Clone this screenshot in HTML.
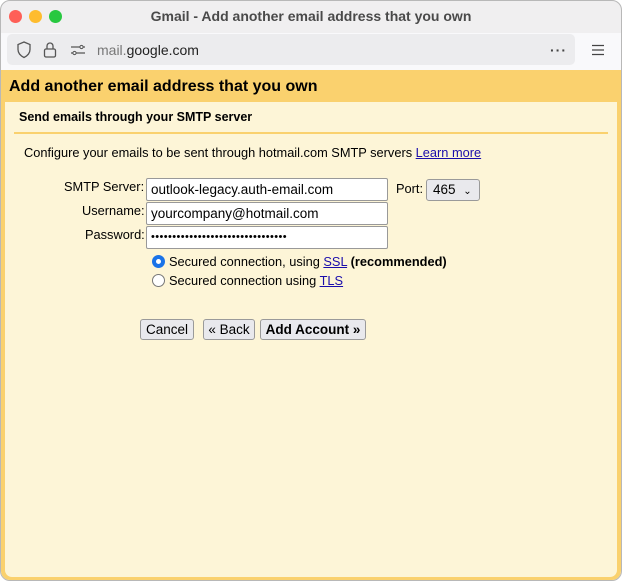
<!DOCTYPE html>
<html><head><style>
*{box-sizing:border-box}
body{margin:0;width:622px;height:581px;background:#fff;font-family:"Liberation Sans",Arial,sans-serif;overflow:hidden}
.win{position:absolute;left:0;top:0;width:622px;height:581px;border:1px solid #b8b8b8;border-radius:10px;overflow:hidden;background:#f0eff0}
.title{position:absolute;top:0;left:0;right:0;height:32px;text-align:center;line-height:31px;font-size:14px;font-weight:bold;color:#4a4a4a}
.dot{position:absolute;top:9px;width:13px;height:13px;border-radius:50%}
.tb{position:absolute;top:32px;left:0;right:0;height:37px;background:#f9f9fb}
.url{position:absolute;left:6px;top:1px;width:568px;height:31px;background:#ececee;border-radius:5px}
.content{position:absolute;top:69px;left:0;right:0;bottom:0;background:#fad16e;border-radius:0 0 9px 9px}
.inner{position:absolute;left:4px;right:4px;top:32px;bottom:3px;background:#fdf5d7;border-radius:0 0 7px 7px}
.h1{position:absolute;left:8px;top:8px;font-size:16px;font-weight:bold;color:#000}
.h2{position:absolute;font-size:12.5px;font-weight:bold}
.hr{position:absolute;height:2px;background:#fad16e}
.t{position:absolute;font-size:12.8px;color:#000;white-space:nowrap}
a{color:#1a0dab;text-decoration:underline}
.in{position:absolute;height:23px;background:#fff;border:1px solid #999;border-radius:2px;font-size:13.5px;padding:3px 4px;white-space:nowrap}
.btn{position:absolute;height:21px;border:1px solid #9a9a9a;border-radius:3px;background:#e9e9ed;font-size:13.5px;text-align:center;line-height:19px}
.radio{position:absolute;width:13px;height:13px;border-radius:50%;border:1px solid #777;background:#fff}
</style></head><body>
<div class="win">
<div class="title">Gmail - Add another email address that you own</div>
<div class="dot" style="left:8px;background:#fe5f57"></div>
<div class="dot" style="left:28px;background:#febc2e"></div>
<div class="dot" style="left:48px;background:#28c840"></div>
<div class="tb"><div class="url">
<svg style="position:absolute;left:9px;top:7px" width="16" height="18" viewBox="0 0 16 18"><path d="M8 1L2 3.5v5c0 4 3 6.5 6 8 3-1.5 6-4 6-8v-5z" fill="none" stroke="#555" stroke-width="1.3"/></svg>
<svg style="position:absolute;left:36px;top:7px" width="14" height="18" viewBox="0 0 14 18"><rect x="1.5" y="8" width="11" height="8" rx="1.5" fill="none" stroke="#555" stroke-width="1.3"/><path d="M4 8V5a3 3 0 016 0v3" fill="none" stroke="#555" stroke-width="1.3"/></svg>
<svg style="position:absolute;left:63px;top:10px" width="16" height="12" viewBox="0 0 16 12"><path d="M1 3h9M13 3h2M1 9h2M6 9h9" stroke="#555" stroke-width="1.2"/><circle cx="11.5" cy="3" r="1.6" fill="none" stroke="#555"/><circle cx="4.5" cy="9" r="1.6" fill="none" stroke="#555"/></svg>
<span style="position:absolute;left:90px;top:8px;font-size:14px;color:#777">mail.<span style="color:#222">google.com</span></span>
<span style="position:absolute;left:543px;top:8px;font-size:14px;color:#444;letter-spacing:1px;font-weight:bold">···</span>
</div>
<svg style="position:absolute;left:590px;top:11px" width="14" height="12" viewBox="0 0 14 12"><path d="M1 1.5h12M1 6h12M1 10.5h12" stroke="#444" stroke-width="1.3"/></svg>
</div>
<div class="content">
<div class="h1">Add another email address that you own</div>
<div class="inner">
<div class="h2" style="top:8px;left:14px">Send emails through your SMTP server</div>
<div class="hr" style="top:30px;left:9px;right:9px"></div>
<div class="t" style="left:19px;top:43px">Configure your emails to be sent through hotmail.com SMTP servers <a>Learn more</a></div>
<div class="t" style="left:59px;top:77px">SMTP Server:</div>
<div class="t" style="left:77px;top:101px">Username:</div>
<div class="t" style="left:80px;top:125px">Password:</div>
<div class="in" style="left:141px;top:76px;width:242px">outlook-legacy.auth-email.com</div>
<div class="in" style="left:141px;top:100px;width:242px">yourcompany@hotmail.com</div>
<div class="in" style="left:141px;top:124px;width:242px;font-size:11px;padding-top:4px;letter-spacing:0.4px">••••••••••••••••••••••••••••••••</div>
<div class="t" style="left:391px;top:79px">Port:</div>
<div class="btn" style="left:421px;top:77px;width:54px;height:22px;text-align:left;padding-left:6px;line-height:20px">465 <span style="font-size:10px;margin-left:4px">&#8964;</span></div>
<div class="radio" style="left:147px;top:153px;border:4px solid #1a73e8"></div>
<div class="t" style="left:164px;top:152px">Secured connection, using <a>SSL</a> <b>(recommended)</b></div>
<div class="radio" style="left:147px;top:172px"></div>
<div class="t" style="left:164px;top:171px">Secured connection using <a>TLS</a></div>
<div class="btn" style="left:135px;top:217px;width:54px">Cancel</div>
<div class="btn" style="left:198px;top:217px;width:52px">« Back</div>
<div class="btn" style="left:255px;top:217px;width:106px;font-weight:bold">Add Account »</div>
</div>
</div>
</div>
</body></html>
